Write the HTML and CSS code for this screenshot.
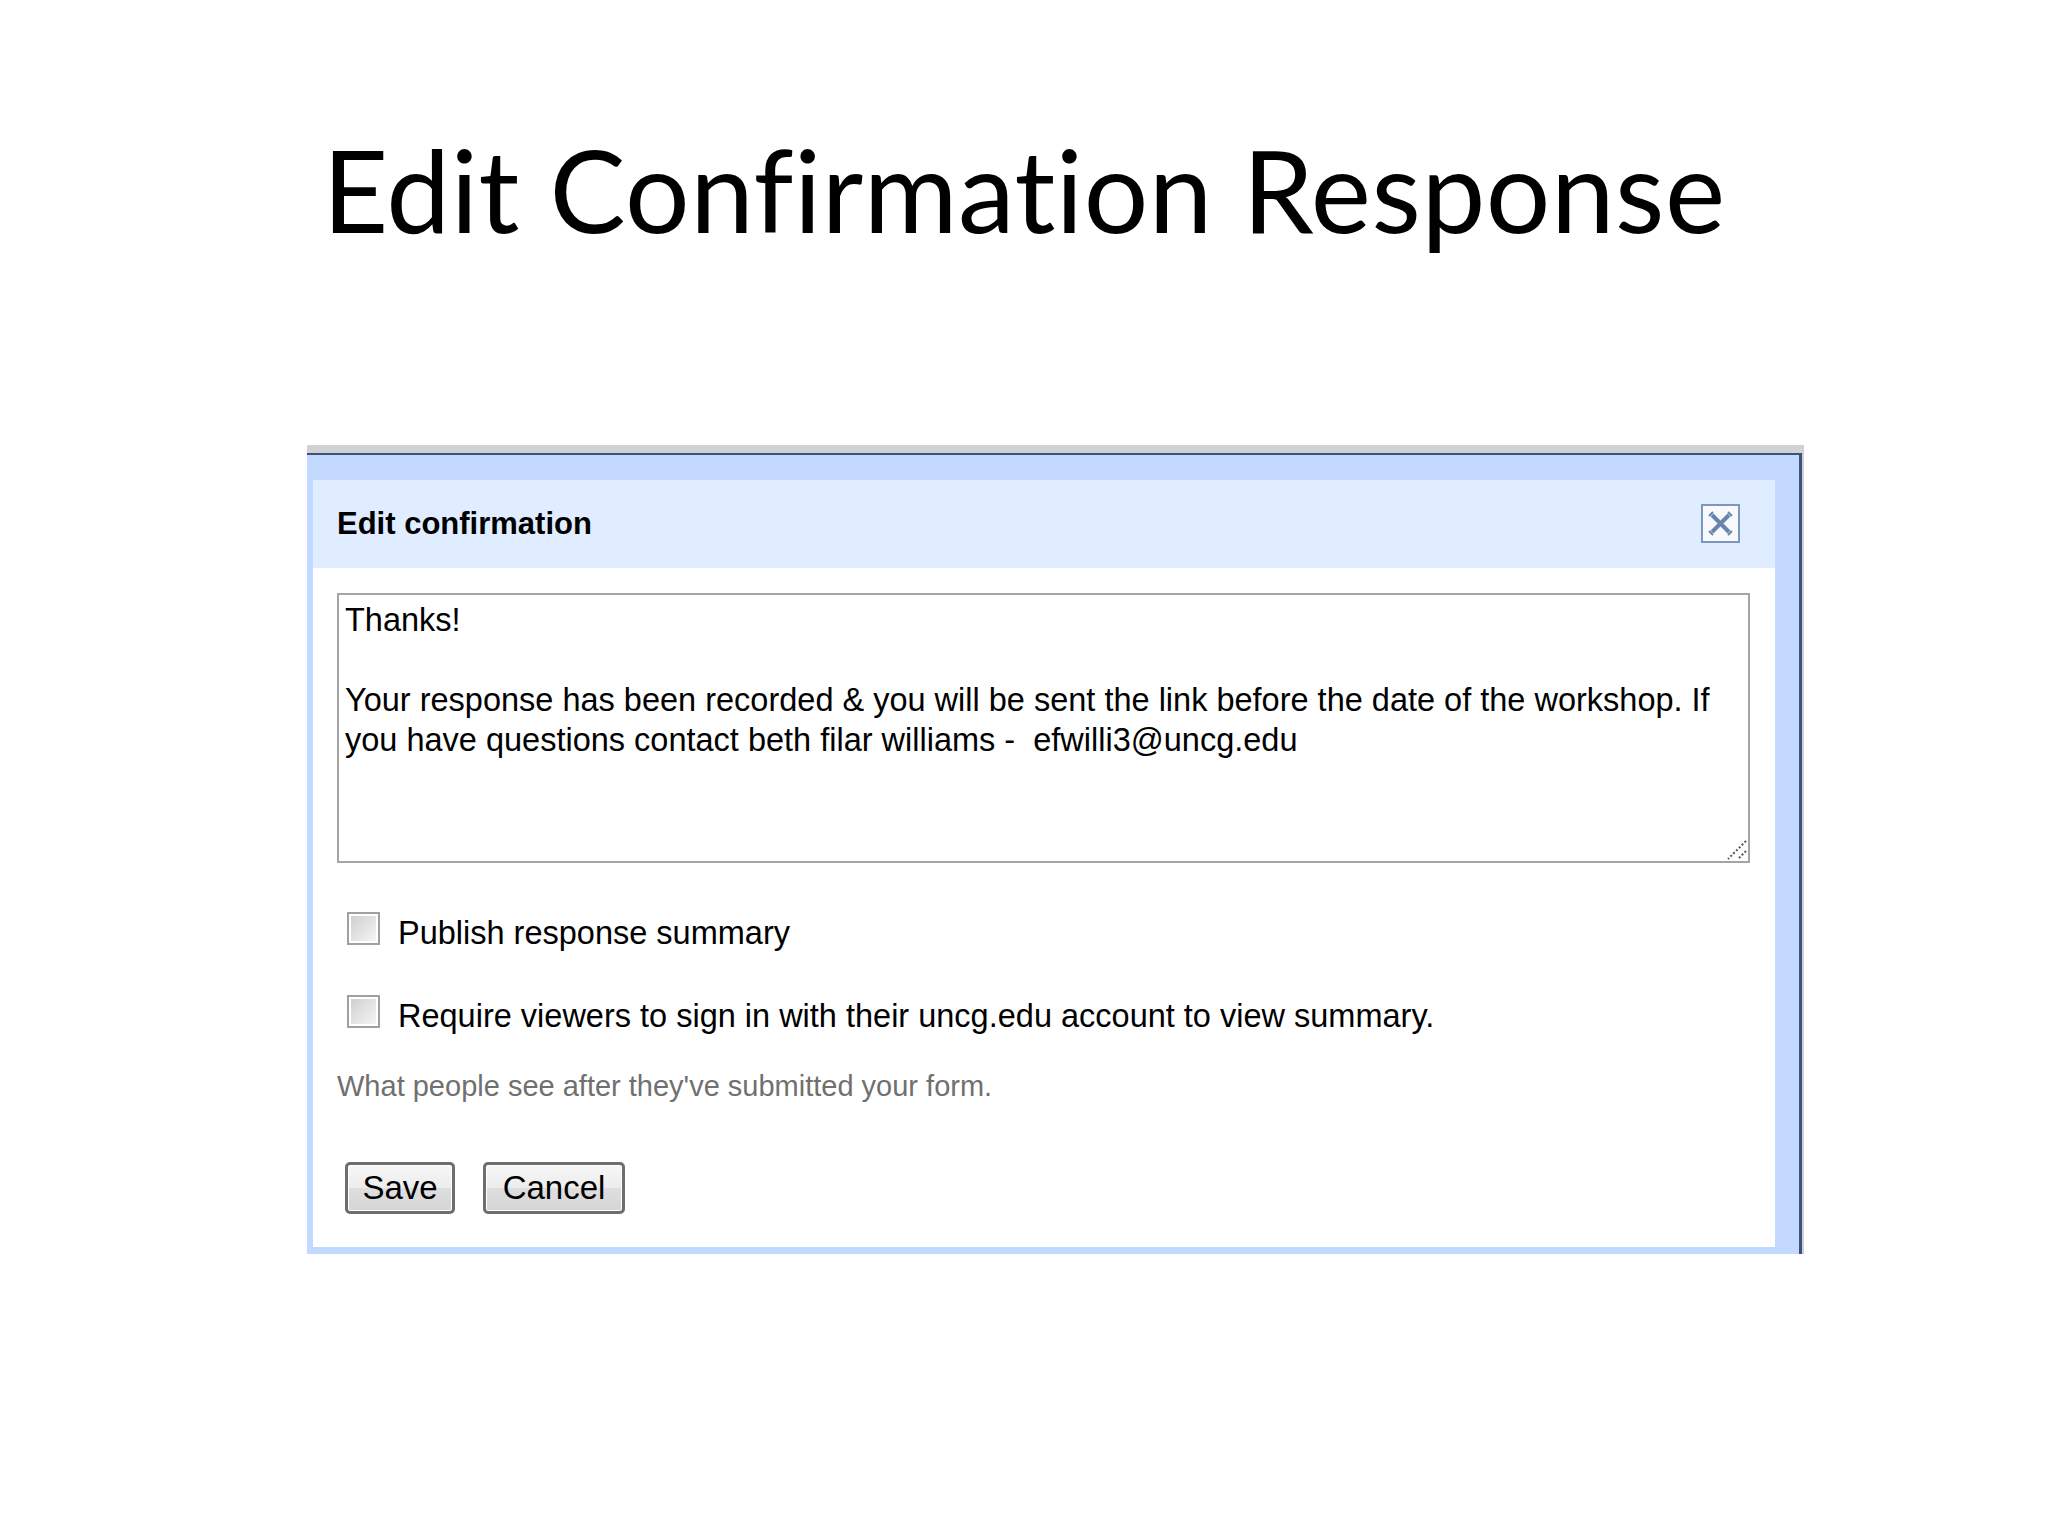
FILE: index.html
```html
<!DOCTYPE html>
<html lang="en">
<head>
  <meta charset="UTF-8">
  <meta name="viewport" content="width=device-width, initial-scale=1.0">
  <title>Edit Confirmation Response</title>
  <link rel="stylesheet" href="styles.css">
</head>
<body>
  <div class="slide">
    <h1 class="slide-title">Edit Confirmation Response</h1>

    <div class="shot">
      <div class="dialog">
        <div class="dialog-head">
          <span class="dialog-title">Edit confirmation</span>
          <button class="close" aria-label="Close">
            <svg width="39" height="39" viewBox="0 0 39 39">
              <rect x="1" y="1" width="37" height="37" fill="#f7f9fd" stroke="#7d97ba" stroke-width="2"/>
              <path d="M11 11L28 28M28 11L11 28" stroke="#6784ab" stroke-width="4"/>
              <path d="M8 12L12 8M27 8L31 12M8 27L12 31M27 31L31 27" stroke="#6784ab" stroke-width="2"/>
            </svg>
          </button>
        </div>

        <div class="dialog-body">
          <div class="message-wrap">
            <textarea class="message">Thanks!

Your response has been recorded &amp; you will be sent the link before the date of the workshop. If you have questions contact beth filar williams -  efwilli3@uncg.edu</textarea>
            <!-- resize handle -->
            <svg class="grip" width="20" height="20" viewBox="0 0 20 20">
              <path d="M19 1L1 19M19 11L11 19" stroke="#555" stroke-width="2" stroke-dasharray="2 2"/>
            </svg>
          </div>

          <label class="option"><input type="checkbox"><span>Publish response summary</span></label>
          <label class="option"><input type="checkbox"><span>Require viewers to sign in with their uncg.edu account to view summary.</span></label>

          <p class="hint">What people see after they've submitted your form.</p>

          <div class="actions">
            <button class="btn btn-save">Save</button>
            <button class="btn btn-cancel">Cancel</button>
          </div>
        </div>
      </div>
    </div>
  </div>
</body>
</html>
```

FILE: styles.css
```css
* {
  box-sizing: border-box;
}
body {
  margin: 0;
  background: #fff;
  color: #000;
  font-family: "Liberation Sans", Arial, sans-serif;
}
.slide {
  padding-top: 121px;
}
.slide-title {
  margin: 0;
  text-align: center;
  font-family: Lato, "Open Sans", sans-serif;
  font-weight: normal;
  font-size: 114px;
  line-height: 1.2;
  letter-spacing: 0.5px;
  font-variant-ligatures: none;
}

/* cropped window grab */
.shot {
  margin: 187px 0 0 307px;
  width: 1497px;
  border-top: 8px solid #d2d2d2;
  border-right: 2px solid #d0d0d0;
}
.dialog {
  background: #c3d9ff;
  border-top: 2px solid #3a5479;
  border-right: 3px solid #3a5479;
  padding: 25px 24px 7px 6px;
}
.dialog-head {
  display: flex;
  align-items: center;
  justify-content: space-between;
  height: 88px;
  padding: 0 35px 0 24px;
  background: #e0ecff;
}
.dialog-title {
  font-weight: bold;
  font-size: 31px;
}
.close {
  width: 39px;
  height: 39px;
  padding: 0;
  border: 0;
  background: none;
}
.close svg {
  display: block;
}
.dialog-body {
  background: #fff;
  padding: 25px 23px 33px 24px;
}
.message-wrap {
  position: relative;
  width: 1413px;
}
.message {
  display: block;
  width: 1413px;
  height: 270px;
  margin: 0;
  padding: 5px 6px;
  border: 2px solid #a5a5a5;
  resize: none;
  font-family: "Liberation Sans", Arial, sans-serif;
  font-size: 32.5px;
  line-height: 40px;
  color: #000;
}
.grip {
  position: absolute;
  right: 3px;
  bottom: 3px;
}
.option {
  display: flex;
  align-items: flex-start;
  margin: 45px 0 0 10px;
  font-size: 32.5px;
  line-height: 33px;
}
.message-wrap + .option {
  margin-top: 49px;
}
.option input {
  appearance: none;
  width: 33px;
  height: 33px;
  margin: 0 18px 0 0;
  border: 2px solid #a0a0a0;
  background: linear-gradient(135deg, #cdcdcd, #f7f7f7);
  box-shadow: inset 0 0 0 2px #fff;
}
.option span {
  margin-top: 5px;
}
.hint {
  margin: 36px 0 0;
  font-size: 29px;
  line-height: 34px;
  color: #707070;
}
.actions {
  display: flex;
  gap: 28px;
  margin-top: 59px;
  padding-left: 8px;
}
.btn {
  height: 52px;
  padding: 0;
  border: 3px solid #6e6e6e;
  border-radius: 5px;
  background: linear-gradient(#f7f7f7, #ececec 50%, #dedede 51%, #d6d6d6);
  box-shadow: inset 0 0 0 1px #fff;
  font-family: "Liberation Sans", Arial, sans-serif;
  font-size: 33px;
  color: #000;
}
.btn-save {
  width: 110px;
}
.btn-cancel {
  width: 142px;
}
```
